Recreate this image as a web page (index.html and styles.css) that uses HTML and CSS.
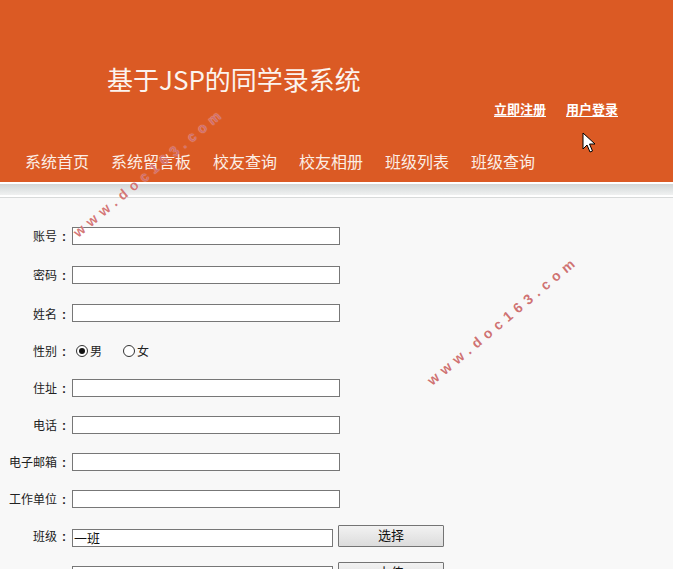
FILE: index.html
```html
<!DOCTYPE html>
<html lang="zh">
<head>
<meta charset="utf-8">
<title>基于JSP的同学录系统</title>
<link rel="stylesheet" href="styles.css">
</head>
<body>
<div class="header">
  <div class="title">基于JSP的同学录系统</div>
  <div class="links">
    <a href="#">立即注册</a>
    <a href="#">用户登录</a>
  </div>
  <div class="nav">
    <a href="#">系统首页</a>
    <a href="#">系统留言板</a>
    <a href="#">校友查询</a>
    <a href="#">校友相册</a>
    <a href="#">班级列表</a>
    <a href="#">班级查询</a>
  </div>
  <svg class="cursor" width="14" height="22" viewBox="0 0 14 22"><path d="M1 1 L1 17 L5 13 L8 20 L10.5 19 L7.5 12 L13 12 Z" fill="#fff" stroke="#000" stroke-width="1"/></svg>
</div>
<div class="strip"><div class="band"></div></div>
<div class="form">
  <div class="row r39"><span class="label">账号<span class="colon">:</span></span><span class="field"></span></div>
  <div class="row r39"><span class="label">密码<span class="colon">:</span></span><span class="field"></span></div>
  <div class="row r38"><span class="label">姓名<span class="colon">:</span></span><span class="field"></span></div>
  <div class="row"><span class="label">性别<span class="colon">:</span></span>
    <span class="radios">
      <span class="radio on"></span><span class="rtext">男</span>
      <span class="radio"></span><span class="rtext">女</span>
    </span>
  </div>
  <div class="row"><span class="label">住址<span class="colon">:</span></span><span class="field"></span></div>
  <div class="row"><span class="label">电话<span class="colon">:</span></span><span class="field"></span></div>
  <div class="row"><span class="label">电子邮箱<span class="colon">:</span></span><span class="field"></span></div>
  <div class="row"><span class="label">工作单位<span class="colon">:</span></span><span class="field"></span></div>
  <div class="row"><span class="label">班级<span class="colon">:</span></span><span class="field short">一班</span><span class="btn">选择</span></div>
  <div class="row"><span class="label"></span><span class="field short"></span><span class="btn">上传</span></div>
</div>
<div class="wm wm1">www.doc163.com</div>
<div class="wm wm2">www.doc163.com</div>
</body>
</html>
```
FILE: styles.css
```css
html, body {
  margin: 0;
  padding: 0;
}
body {
  background: #f8f8f8;
  font-family: "Noto Sans CJK SC", "Microsoft YaHei", sans-serif;
  width: 673px;
  height: 569px;
  overflow: hidden;
  position: relative;
}
.header {
  background: #db5a24;
  height: 182px;
  color: #fff;
  position: relative;
}
.title {
  padding: 62px 0 0 107px;
  font-size: 26px;
  line-height: 33px;
  color: #fbf4ef;
}
.links {
  display: flex;
  justify-content: flex-end;
  gap: 20px;
  padding-right: 55px;
  margin-top: 6px;
}
.links a {
  color: #fff;
  font-size: 13px;
  line-height: 16px;
  font-weight: bold;
  text-decoration: underline;
  text-underline-offset: 2px;
}
.nav {
  display: flex;
  gap: 22px;
  padding-left: 25px;
  margin-top: 34px;
}
.nav a {
  color: #fbeee6;
  font-size: 16px;
  line-height: 20px;
  text-decoration: none;
}
.cursor {
  position: absolute;
  left: 582px;
  top: 132px;
}
.strip {
  background: #fff;
  padding: 2px 0 2px;
  border-bottom: 1px solid #d8dada;
}
.band {
  height: 11px;
  background: linear-gradient(#d2d6d6, #e4e7e7 60%, #f0f1f1);
}
.form {
  padding-top: 18px;
  font-size: 12px;
  color: #222;
}
.row {
  display: flex;
  align-items: center;
  height: 37px;
}
.r39 { height: 39px; }
.r38 { height: 38px; }
.label {
  width: 70px;
  text-align: right;
  flex: none;
}
.colon {
  display: inline-block;
  width: 12px;
  text-align: center;
  font-family: "Liberation Sans", Arial, sans-serif;
  font-weight: bold;
  font-size: 12px;
  padding-left: 1px;
}
.field {
  box-sizing: border-box;
  margin-left: 2px;
  width: 268px;
  height: 18px;
  border: 1px solid #777;
  background: #fff;
  font-size: 13px;
  line-height: 16px;
  padding-left: 1px;
  color: #111;
}
.field.short {
  width: 261px;
  margin-top: 4px;
}
.btn {
  box-sizing: border-box;
  margin-left: 5px;
  width: 106px;
  height: 22px;
  border: 1px solid #747474;
  border-radius: 1px;
  background: linear-gradient(#f2f2f2, #dcdcdc);
  font-size: 13px;
  line-height: 18px;
  text-align: center;
  color: #111;
}
.radios {
  display: flex;
  align-items: center;
  margin-left: 6px;
}
.radio {
  box-sizing: border-box;
  width: 12px;
  height: 12px;
  border: 1px solid #333;
  border-radius: 50%;
  background: #fff;
  position: relative;
}
.radio.on::after {
  content: "";
  position: absolute;
  left: 2px;
  top: 2px;
  width: 6px;
  height: 6px;
  border-radius: 50%;
  background: #111;
}
.rtext {
  margin-left: 2px;
  margin-right: 21px;
  font-size: 12px;
}
.wm {
  position: absolute;
  font-family: "Liberation Sans", Arial, sans-serif;
  font-weight: bold;
  font-size: 14px;
  letter-spacing: 5.4px;
  color: rgba(200, 90, 90, 0.85);
  transform: rotate(-40deg);
  transform-origin: 0 0;
  white-space: nowrap;
}
.wm1 {
  left: 70px;
  top: 228px;
  color: rgba(205, 95, 95, 0.85);
  text-shadow: 0 0 1px rgba(255, 255, 255, 0.7);
}
.wm2 {
  left: 424px;
  top: 376px;
}
```
